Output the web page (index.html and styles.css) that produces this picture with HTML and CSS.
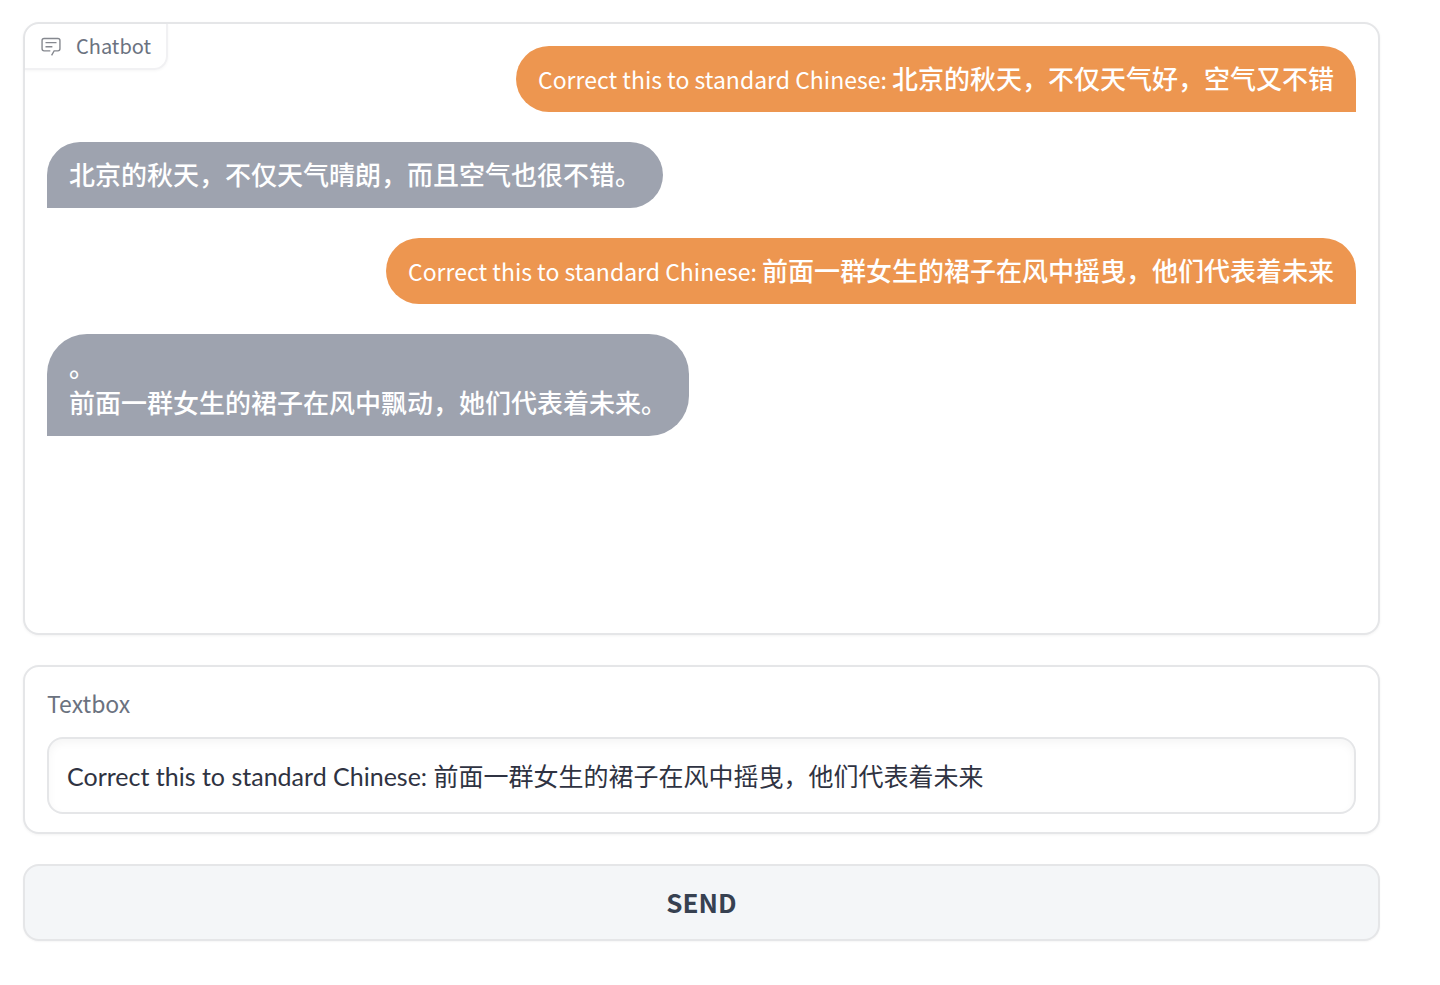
FILE: index.html
```html
<!DOCTYPE html>
<html lang="zh-CN">
<head>
    <meta charset="UTF-8">
    <meta name="viewport" content="width=device-width, initial-scale=1.0">
    <title>Chatbot</title>
    <link rel="stylesheet" href="styles.css">
</head>
<body>
    <main class="container">
        <section class="panel chatbot">
            <div class="chat-label">
                <svg class="chat-icon" viewBox="0 0 32 32" aria-hidden="true">
                    <path fill="currentColor" d="M17.74 30L16 29l4-7h6a2 2 0 0 0 2-2V8a2 2 0 0 0-2-2H6a2 2 0 0 0-2 2v12a2 2 0 0 0 2 2h9v2H6a4 4 0 0 1-4-4V8a4 4 0 0 1 4-4h20a4 4 0 0 1 4 4v12a4 4 0 0 1-4 4h-4.84Z"/>
                    <path fill="currentColor" d="M8 10h16v2H8zm0 6h10v2H8z"/>
                </svg>
                <span>Chatbot</span>
            </div>
            <div class="messages">
                <div class="message user"><span class="latin">Correct this to standard Chinese: </span>北京的秋天，不仅天气好，空气又不错</div>
                <div class="message bot">北京的秋天，不仅天气晴朗，而且空气也很不错。</div>
                <div class="message user"><span class="latin">Correct this to standard Chinese: </span>前面一群女生的裙子在风中摇曳，他们代表着未来</div>
                <div class="message bot">。<br>前面一群女生的裙子在风中飘动，她们代表着未来。</div>
            </div>
        </section>

        <form class="chat-form">
            <div class="panel field">
                <label for="message">Textbox</label>
                <input type="text" id="message" name="message" value="Correct this to standard Chinese: 前面一群女生的裙子在风中摇曳，他们代表着未来">
            </div>
            <button type="button">SEND</button>
        </form>
    </main>
</body>
</html>
```

FILE: styles.css
```css
* { box-sizing: border-box; }
body {
    margin: 0;
    background: #fff;
    color: #2f3342;
    font-family: "Noto Sans CJK SC", sans-serif;
    font-size: 26px;
    line-height: 36px;
}
.container {
    display: flex;
    flex-direction: column;
    gap: 30px;
    padding: 22px 60px 44px 23px;
}
.panel {
    border: 2px solid #e5e6e8;
    border-radius: 16px;
    background: #fff;
    box-shadow: 0 1px 3px rgba(0, 0, 0, 0.05);
}
.chatbot {
    position: relative;
    min-height: 613px;
    padding: 22px;
}
.chat-label {
    position: absolute;
    top: 0;
    left: 0;
    display: flex;
    align-items: center;
    gap: 14px;
    height: 46px;
    padding: 0 15px;
    border: solid #f1f1f3;
    border-width: 0 2px 2px 0;
    border-radius: 14px 0 14px 0;
    box-shadow: 0 1px 3px rgba(0, 0, 0, 0.04);
    color: #6b7280;
    font-size: 20px;
}
.chat-icon {
    width: 22px;
    height: 22px;
    color: #85888f;
}
.messages {
    display: flex;
    flex-direction: column;
    align-items: flex-start;
    gap: 30px;
}
.message {
    padding: 14px 22px 16px;
    border-radius: 40px;
    color: #fff;
    font-weight: 500;
}
/* latin glyphs run larger than the Chinese ones in this font */
.latin {
    font-size: 23px;
    font-weight: 400;
    line-height: 30px;
}
.user {
    align-self: flex-end;
    border-bottom-right-radius: 0;
    background: #ed9650;
}
.bot {
    border-bottom-left-radius: 0;
    background: #9ea3af;
}
.chat-form {
    display: flex;
    flex-direction: column;
    gap: 30px;
}
.field { padding: 18px 22px; }
label {
    display: block;
    margin-bottom: 16px;
    color: #6b7280;
    font-size: 23px;
}
input {
    display: block;
    width: 100%;
    height: 77px;
    padding: 0 18px 2px;
    border: 2px solid #e5e6e8;
    border-radius: 16px;
    background: #fff;
    box-shadow: inset 0 4px 8px rgba(0, 0, 0, 0.04);
    color: inherit;
    font-family: Lato, "Noto Sans CJK SC", sans-serif;
    font-size: 25px;
}
button {
    width: 100%;
    height: 77px;
    padding: 0 0 2px;
    border: 2px solid #e5e6e8;
    border-radius: 16px;
    background: #f4f6f8;
    box-shadow: 0 1px 2px rgba(0, 0, 0, 0.04);
    color: #374151;
    font-family: inherit;
    font-size: 26px;
    font-weight: bold;
    cursor: pointer;
}
```
